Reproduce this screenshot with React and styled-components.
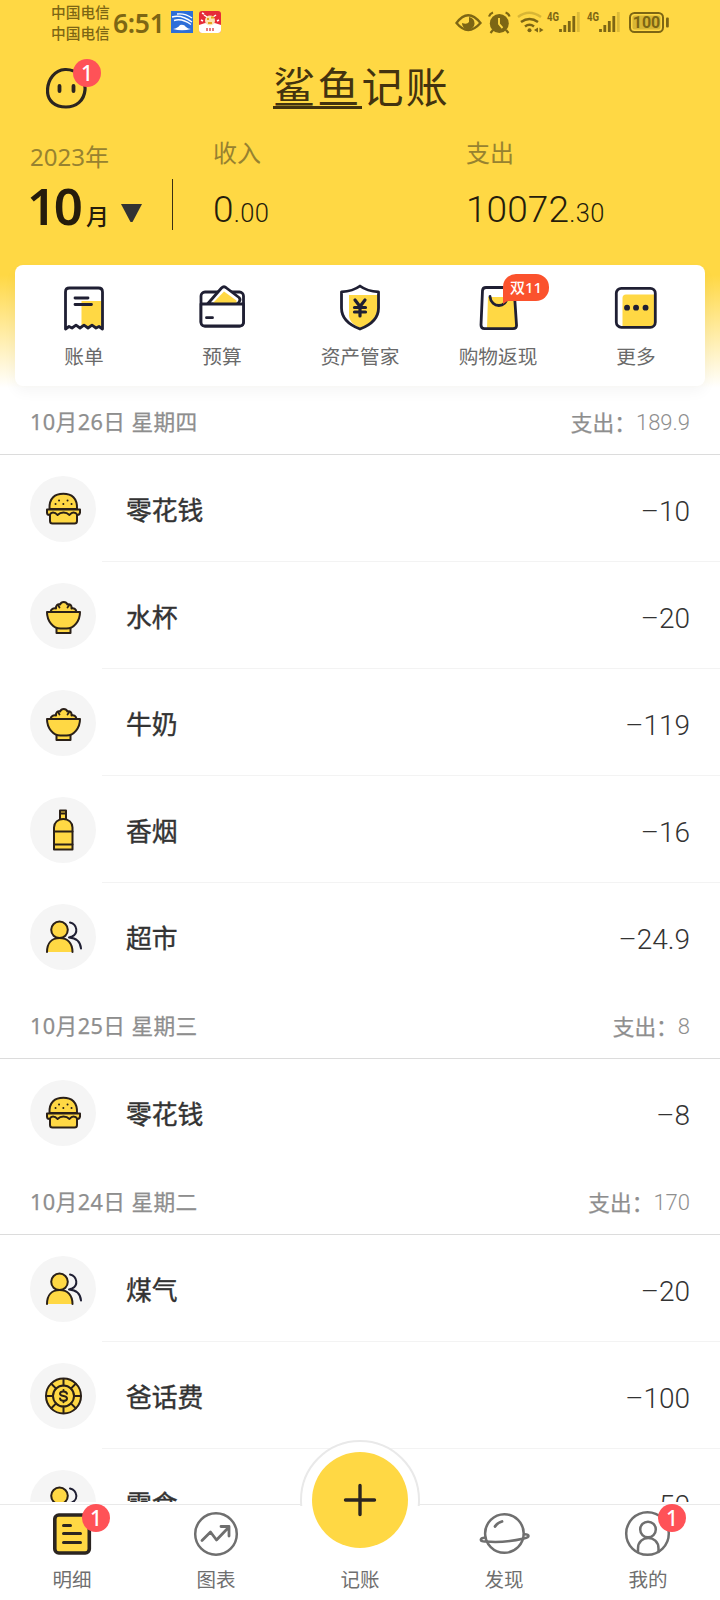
import styled, { createGlobalStyle } from "styled-components";

const DARK = "#2b2520";
const NAVY = "#1f1f33";
const YELLOW = "#ffd844";
const STATUS = "#7d6614";
const DIGITS = '"Noto Sans", "Noto Sans CJK SC", sans-serif';

const days = [
  {
    date: "10月26日 星期四",
    total: "189.9",
    items: [
      { icon: "burger", name: "零花钱", amount: "–10" },
      { icon: "rice", name: "水杯", amount: "–20" },
      { icon: "rice", name: "牛奶", amount: "–119" },
      { icon: "bottle", name: "香烟", amount: "–16" },
      { icon: "people", name: "超市", amount: "–24.9" },
    ],
  },
  {
    date: "10月25日 星期三",
    total: "8",
    items: [{ icon: "burger", name: "零花钱", amount: "–8" }],
  },
  {
    date: "10月24日 星期二",
    total: "170",
    items: [
      { icon: "people", name: "煤气", amount: "–20" },
      { icon: "coin", name: "爸话费", amount: "–100" },
      { icon: "people", name: "零食", amount: "–50" },
    ],
  },
];

const shortcuts = [
  { icon: "bill", label: "账单" },
  { icon: "wallet", label: "预算" },
  { icon: "shield", label: "资产管家" },
  { icon: "bag", label: "购物返现", tag: "双11" },
  { icon: "more", label: "更多" },
];

const tabs = [
  { icon: "detail", label: "明细", badge: 1 },
  { icon: "chart", label: "图表" },
  { icon: null, label: "记账" },
  { icon: "planet", label: "发现" },
  { icon: "mine", label: "我的", badge: 1 },
];

const categoryIcons = {
  burger: (
    <>
      <path d="M8.500 22C8 11 14 6.800 22.300 6.800S36.500 11 36 22z" fill={YELLOW} />
      <path d="M9 25v9q0 2.500 2.500 2.500h22q2.500 0 2.500-2.500v-9z" fill={YELLOW} />
      <path d="M6 22.500h33v3q-.5 2.500-2.500 2.500-1.500-2.500-4-2.500-2 0-4 2.500-2.500-2.500-6-2.500t-6 2.500q-2-2.500-4.500-2.500-2 0-3.500 2.500-2.500 0-2.500-2.500z" fill={YELLOW} />
      <path d="M18 13.500h.1M26.500 13.500h.1M14.500 17h.1M22.300 17h.1M30.500 17h.1" strokeWidth="1.900" />
    </>
  ),
  rice: (
    <>
      <path d="M9.500 18c.5-3 3-4 5.500-3.500-.5-3 2-5 4-4 1.500-3.500 6-3.500 7.500 0 2.500-.8 4.500 1 4 4 2.500-.5 4.500.5 5 3.500z" fill={YELLOW} />
      <path d="M17 11l1.500 2.500M28 11.500l-1.500 2" strokeWidth="1.800" />
      <path d="M15.500 34h14v5h-14z" fill={YELLOW} />
      <path d="M6 18h33c0 9-6 16.500-13.500 16.500h-6C12 34.500 6 27 6 18z" fill={YELLOW} />
    </>
  ),
  bottle: (
    <>
      <path d="M19 2.500h6v9h-6z" fill={YELLOW} />
      <path d="M13 41.500V19.500c0-5 4-8.500 9.300-8.500s9.200 3.500 9.200 8.500v22z" fill={YELLOW} />
      <path d="M13 23.500h18.500M13 36.500h18.500M19 5.500h6" />
    </>
  ),
  people: (
    <>
      <path d="M6 37c0-9 5-14 12.700-14S31.500 28 31.500 37" fill={YELLOW} />
      <circle cx="18.500" cy="14.800" r="8.300" fill={YELLOW} />
      <path d="M29 7.500c7.500 2 8.500 11 2 14l-3 1c7.500.5 11.500 5 12 11" stroke={NAVY} />
    </>
  ),
  coin: (
    <>
      <circle cx="22.500" cy="22" r="17.500" fill={YELLOW} />
      <circle cx="22.500" cy="22" r="10.500" />
      <path d="M22.500 5v6.500M22.500 32.500V39M5.500 22H12M33 22h6.500M10.300 9.800l4.800 4.800M29.900 29.400l4.800 4.800M34.700 9.800l-4.800 4.800M15.100 29.400l-4.800 4.800" />
      <path d="M26 19.800c-.4-1.700-1.800-2.400-3.500-2.400-1.900 0-3.500.8-3.500 2.400 0 3.200 7 1.400 7 4.600 0 1.700-1.600 2.400-3.500 2.400-1.700 0-3.300-.7-3.500-2.400M22.500 16v1.400M22.500 26.800v1.400" />
    </>
  ),
};

const shortcutIcons = {
  bill: (
    <>
      <path d="M21.500 18H42v26l-3-1.500-3 1.500-4-2.500-4 2.500-4-2.500-2.500 2z" fill={YELLOW} stroke="none" />
      <path d="M5.500 46V9q0-4 4-4h29q4 0 4 4v37L39 43.500l-3 1.500-4-2.800-4 2.800-4-2.800-4 2.800-4-2.800-4 2.800-3-1.500z" />
      <path d="M15 15h13M15 21.500h16.500" />
    </>
  ),
  wallet: (
    <>
      <rect x="3" y="9" width="42.500" height="34" rx="4" />
      <path d="M9.500 21L23.500 5q2.500-2.500 5 0L41 14.500q2 2 0 4.500l-1.500 2z" fill="#fff" />
      <path d="M14.500 20.500L26 8.500l12.500 9v3z" fill={YELLOW} stroke="none" />
      <path d="M3 21h42.500v18q0 4-4 4H7q-4 0-4-4z" fill="#fff" />
      <path d="M8.500 34.700h6" />
    </>
  ),
  shield: (
    <>
      <path d="M13 12h29v14c0 9-7 15-18 19C16 41 13 37 13 32z" fill={YELLOW} stroke="none" />
      <path d="M24 3c6 4.500 12 5.500 18.500 5.800V25c0 11-8 17-18.500 21C13.500 42 5.500 36 5.500 25V8.800C12 8.500 18 7.500 24 3z" />
      <path d="M19 17l5 6.500 5-6.500M24 23.500V33M18.500 24.500h11M18.500 29h11" strokeWidth="3.200" />
    </>
  ),
  bag: (
    <>
      <path d="M14 14h27l1.500 31H13z" fill={YELLOW} stroke="none" />
      <path d="M12 4.500h25q3 0 3.200 3L42.500 42q.3 3.700-3.500 3.700H10.500Q7 45.700 7 42L8.500 7.500q.3-3 3.500-3z" />
      <path d="M16 13.500c1 12 17 12 17 0" />
    </>
  ),
  more: (
    <>
      <path d="M10.500 15q0-3.500 3.500-3.500h28V40q0 3.500-3.500 3.500h-28z" fill={YELLOW} stroke="none" />
      <rect x="4.300" y="5.300" width="39" height="39" rx="5" />
      <path d="M15 24.700h.1M24 24.700h.1M33.500 24.700h.1" strokeWidth="5.800" />
    </>
  ),
};

const tabIcons = {
  detail: (
    <g stroke={DARK} strokeWidth="3.600">
      <rect x="6.800" y="6" width="34.500" height="38" rx="4" fill={YELLOW} />
      <path d="M15.500 16.500h7M15.500 24.500h17M15.500 33.500h17" strokeWidth="3" />
    </g>
  ),
  chart: (
    <>
      <circle cx="24" cy="25" r="20.800" />
      <path d="M10 31.500l8.500-8.500 6 8L36 19M29 17.500h8V27" strokeWidth="2.800" />
    </>
  ),
  planet: (
    <>
      <circle cx="24.400" cy="24.500" r="19.300" />
      <path d="M5.500 28.500c-6.500.5-6 4.500 0 4 13 1.200 25.500 0 38.500-3 6.500-1 5.500-4.500 0-4.300" />
      <path d="M15 17.500q2-3.500 7-5" strokeWidth="2.800" />
    </>
  ),
  mine: (
    <>
      <circle cx="23.500" cy="24.500" r="21.300" />
      <circle cx="24" cy="20.500" r="7.800" />
      <path d="M14 43v-3.500c0-14 20.500-14 20.500 0V43" />
    </>
  ),
};

function StatusBar() {
  return (
    <Status>
      <Carriers>
        <span>中国电信</span>
        <span>中国电信</span>
      </Carriers>
      <Clock>6:51</Clock>
      <AppIcons>
        <svg width="22" height="22" viewBox="0 0 22 22">
          <rect width="22" height="22" fill="#2d6fd8" />
          <path d="M1 6q9-3 20 5M3 9.500q8-2.500 17 4M6 3q8-1 15 4" fill="none" stroke="#fff" strokeWidth="1.400" />
          <path d="M2 18q5-1 7-4 4-1 6 2 2 2 5 2-9 2.500-18 0z" fill="#fff" />
        </svg>
        <svg width="22" height="22" viewBox="0 0 22 22">
          <rect width="22" height="22" rx="3" fill="#e62c38" />
          <path d="M0 14q11-5 22 0v5q0 3-3 3H3q-3 0-3-3z" fill="#fff" />
          <circle cx="11" cy="9.500" r="5" fill="#fbe3b1" />
          <path d="M5 4l3 2M17 4l-3 2M2 9l2 1M20 9l-2 1M3 2l2 1" stroke="#fff" strokeWidth="1.500" />
          <path d="M8 8h2M12 6.500h3M9 12h4" stroke="#e8a51b" strokeWidth="1.800" />
          <path d="M8 17v3M11 17v3M14 17v3" stroke="#d73a3a" strokeWidth="1.300" />
        </svg>
      </AppIcons>
      <Indicators width="216" height="24" viewBox="0 0 216 24">
        {/* eye */}
        <path d="M2.500 13Q14-2.500 26.500 13 14 27 2.500 13z" fill="none" stroke={STATUS} strokeWidth="2.300" />
        <path d="M15 7a6.300 6.300 0 1 1-7 6q5 2 7-1z" fill={STATUS} />
        {/* alarm */}
        <circle cx="45.300" cy="13.500" r="9.500" fill={STATUS} />
        <path d="M35 6.500q1-3 4-4M55.600 6.500q-1-3-4-4M39 20l-2.500 3M52 20l2.500 3" stroke={STATUS} strokeWidth="2.200" fill="none" />
        <path d="M45 8v6l3.500 4" stroke={YELLOW} strokeWidth="1.900" fill="none" />
        {/* wifi */}
        <g fill="none" stroke={STATUS} strokeWidth="2.500">
          <path d="M64 7q11-8.500 23 0" opacity=".3" />
          <path d="M67 12q8.500-6 17 0M71 16.500q4.500-3.500 9 0" />
        </g>
        <circle cx="75.500" cy="20.300" r="2" fill={STATUS} />
        <path d="M84 17.500l-4 2.500 4 2.500zM85.500 17.500l4 2.500-4 2.500z" fill={STATUS} />
        {[93, 133].map((x) => (
          <g key={x}>
            <NetText x={x} y="11" textLength="12" lengthAdjust="spacingAndGlyphs">4G</NetText>
            <path
              d={`M${x + 13.500} 22v-3M${x + 17.800} 22v-7M${x + 22.300} 22v-11M${x + 26.800} 22V6`}
              stroke={STATUS}
              strokeWidth="2.800"
            />
            <path d={`M${x + 31.300} 22V2`} stroke={STATUS} strokeWidth="2.800" opacity=".25" />
          </g>
        ))}
        {/* battery */}
        <rect x="176" y="3" width="33" height="19" rx="4.500" fill="none" stroke={STATUS} strokeWidth="2" />
        <rect x="178.500" y="5.500" width="28" height="14" rx="2" fill={STATUS} opacity=".3" />
        <rect x="212" y="7.500" width="2.800" height="10" rx="1" fill={STATUS} />
        <BatteryText x="192.500" y="18">100</BatteryText>
      </Indicators>
    </Status>
  );
}

function Entry({ icon, name, amount }) {
  return (
    <Row>
      <Avatar>
        <LineIcon size={44} viewBox="0 0 44 44" $color="#2a2018" $width={2}>
          {categoryIcons[icon]}
        </LineIcon>
      </Avatar>
      <RowBody>
        <Name>{name}</Name>
        <Amount>{amount}</Amount>
      </RowBody>
    </Row>
  );
}

function Day({ date, total, items }) {
  return (
    <section>
      <DayHeader>
        <DayDate>{date}</DayDate>
        <DayTotal>
          支出：<Light>{total}</Light>
        </DayTotal>
      </DayHeader>
      {items.map((item, i) => (
        <Entry key={i} {...item} />
      ))}
    </section>
  );
}

function App() {
  return (
    <Screen>
      <GlobalStyle />
      <StatusBar />
      <TitleBar>
        <Profile>
          <svg width="42" height="44" viewBox="0 0 42 44">
            <path
              d="M19 2.500C30 2 40 11 39 23c-1 11-9 17-19 17C9 40 1.500 34 1.500 24 1.500 12 9 3 19 2.500z"
              fill="none"
              stroke={DARK}
              strokeWidth="3.200"
            />
            <path d="M13.500 19v5M27.500 19v5" stroke={DARK} strokeWidth="3.800" strokeLinecap="round" />
          </svg>
          <Badge $top={-8} $left={27}>1</Badge>
        </Profile>
        <Logo>
          <em>鲨鱼</em>记账
        </Logo>
      </TitleBar>
      <Summary>
        <Month>
          <Caption>2023年</Caption>
          <MonthValue>
            <b>10</b>
            <span>月</span>
            <svg width="21" height="21" viewBox="0 0 21 21">
              <path d="M0 0h21L11.500 18h-2z" fill="#333" />
            </svg>
          </MonthValue>
        </Month>
        <Divider />
        <Figure $width={253}>
          <Caption>收入</Caption>
          <Money>0<small>.00</small></Money>
        </Figure>
        <Figure>
          <Caption>支出</Caption>
          <Money>10072<small>.30</small></Money>
        </Figure>
      </Summary>
      <Card>
        {shortcuts.map(({ icon, label, tag }) => (
          <Shortcut key={label}>
            <LineIcon size={48} viewBox="0 0 48 48" $color={NAVY} $width={2.800}>
              {shortcutIcons[icon]}
            </LineIcon>
            <span>{label}</span>
            {tag && <Tag>{tag}</Tag>}
          </Shortcut>
        ))}
      </Card>
      <List>
        {days.map((day) => (
          <Day key={day.date} {...day} />
        ))}
      </List>
      <TabBar>
        <Ring />
        <AddButton aria-label="add">
          <svg width="34" height="34" viewBox="0 0 34 34">
            <path d="M17 2.500v29M2.500 17h29" stroke={DARK} strokeWidth="3.400" strokeLinecap="round" />
          </svg>
        </AddButton>
        {tabs.map(({ icon, label, badge }) => (
          <Tab key={label}>
            <LineIcon size={48} viewBox="0 0 48 48" $color="#6f6f6f" $width={2.500}>
              {icon && tabIcons[icon]}
            </LineIcon>
            <span>{label}</span>
            {badge && <Badge $top={-1} $left={82}>{badge}</Badge>}
          </Tab>
        ))}
      </TabBar>
    </Screen>
  );
}

const GlobalStyle = createGlobalStyle`
  body {
    margin: 0;
    font-family: "Noto Sans CJK SC", sans-serif;
    background: #fff;
  }
`;

const Screen = styled.div`
  display: flex;
  flex-direction: column;
  width: 720px;
  height: 1600px;
  overflow: hidden;
  background: linear-gradient(${YELLOW} 0, ${YELLOW} 275px, #fff 388px);
`;

const Status = styled.header`
  display: flex;
  align-items: center;
  height: 46px;
  padding: 0 50px 0 51px;
  box-sizing: border-box;
  color: ${STATUS};
`;

const Carriers = styled.div`
  display: flex;
  flex-direction: column;
  width: 62px;
  margin-top: -2px;
  font-size: 14.700px;
  line-height: 21.500px;
  font-weight: 500;
`;

const Clock = styled.div`
  width: 58px;
  font-family: ${DIGITS};
  font-size: 26.500px;
  line-height: 30px;
  font-weight: 600;
  letter-spacing: -0.300px;
`;

const AppIcons = styled.div`
  display: flex;
  gap: 6px;
  margin-top: -2px;
`;

const Indicators = styled.svg`
  margin: -2px 0 0 auto;
`;

const NetText = styled.text`
  font: 700 12.500px Roboto, sans-serif;
  fill: ${STATUS};
`;

const BatteryText = styled.text`
  font: 700 16px Roboto, sans-serif;
  text-anchor: middle;
  fill: ${STATUS};
`;

const TitleBar = styled.div`
  display: flex;
  align-items: center;
  justify-content: center;
  height: 86px;
  position: relative;
`;

const Profile = styled.div`
  position: absolute;
  top: 21px;
  left: 46px;
`;

const Badge = styled.span`
  position: absolute;
  top: ${(p) => p.$top}px;
  left: ${(p) => p.$left}px;
  width: 28px;
  height: 28px;
  border-radius: 50%;
  background: #ff5257;
  color: #fff;
  font-family: ${DIGITS};
  font-size: 21px;
  line-height: 28px;
  font-weight: 500;
  text-align: center;
`;

const Logo = styled.h1`
  margin: -5px 0 0 3px;
  font-size: 42px;
  line-height: 42px;
  font-weight: 400;
  letter-spacing: 2.200px;
  color: #43330f;

  em {
    font-style: normal;
    display: inline-block;
    padding-bottom: 2px;
    border-bottom: 3px solid #43330f;
    line-height: 38px;
  }
`;

const Summary = styled.div`
  display: flex;
  height: 133px;
  flex: none;
`;

const Caption = styled.div`
  font-family: ${DIGITS};
  font-size: 24px;
  line-height: 32px;
  color: #978230;
`;

const Month = styled.div`
  width: 142px;
  padding: 9px 0 0 30px;
`;

const MonthValue = styled.div`
  display: flex;
  align-items: baseline;
  color: #251c0c;

  b {
    width: 56px;
    font-family: ${DIGITS};
    font-size: 51px;
    line-height: 65px;
    font-weight: 600;
    letter-spacing: -2.500px;
    text-indent: -3px;
  }

  span {
    font-size: 23px;
    font-weight: 500;
    width: 35px;
  }
`;

const Divider = styled.div`
  width: 1px;
  height: 51px;
  margin: 47px 40px 0 0;
  background: #3a2f12;
`;

const Figure = styled.div`
  width: ${(p) => (p.$width ? p.$width + "px" : "auto")};
  padding-top: 5px;
`;

const Money = styled.div`
  font-family: Roboto, sans-serif;
  font-size: 37px;
  line-height: 50px;
  margin-top: 16px;
  font-weight: 300;
  letter-spacing: 0.100px;
  color: #251c0c;

  small {
    font-size: 25.500px;
    letter-spacing: 0.500px;
  }
`;

const Card = styled.nav`
  display: grid;
  grid-template-columns: repeat(5, 1fr);
  flex: none;
  height: 121px;
  margin: 0 15px;
  border-radius: 8px;
  background: #fff;
  box-shadow: 0 6px 14px rgba(0, 0, 0, 0.04);
`;

const Shortcut = styled.div`
  display: flex;
  flex-direction: column;
  align-items: center;
  position: relative;
  padding-top: 18px;
  font-size: 19.700px;
  line-height: 28px;
  color: #6a6a6a;

  span:nth-child(2) {
    margin-top: 11px;
  }
`;

const Tag = styled.b`
  position: absolute;
  top: 9px;
  left: 74px;
  width: 46px;
  height: 27px;
  border-radius: 13px 13px 13px 0;
  background: #fb522d;
  color: #fff;
  font-family: ${DIGITS};
  font-size: 15px;
  line-height: 27px;
  font-weight: 500;
  text-align: center;

  &::after {
    content: "";
    position: absolute;
    left: 0;
    top: 26px;
    border-top: 4px solid #fb522d;
    border-right: 6px solid transparent;
  }
`;

const LineIcon = styled.svg.attrs((p) => ({ width: p.size, height: p.size }))`
  flex: none;
  fill: none;
  stroke: ${(p) => p.$color};
  stroke-width: ${(p) => p.$width};
  stroke-linecap: round;
  stroke-linejoin: round;
  overflow: visible;
`;

const List = styled.main`
  flex: 1;
  min-height: 0;
  overflow: hidden;
`;

const DayHeader = styled.div`
  display: flex;
  align-items: center;
  justify-content: space-between;
  height: 69px;
  box-sizing: border-box;
  padding: 4px 30px 0;
  border-bottom: 1px solid #dcdcdc;
  font-size: 21.700px;
  line-height: 32px;
  color: #8e8e8e;
  -webkit-text-stroke: 0.250px #8e8e8e;
`;

const DayDate = styled.span`
  font-family: ${DIGITS};
  font-size: 21.700px;
  letter-spacing: 0.400px;
`;

const DayTotal = styled.div`
  display: flex;
  align-items: center;
  margin-top: -1px;
`;

const Light = styled.span`
  font-family: Roboto, sans-serif;
  font-weight: 300;
  font-size: 22px;
  padding-top: 2px;
  -webkit-text-stroke: 0;
`;

const Row = styled.div`
  display: flex;
  align-items: center;
  height: 107px;
  padding-left: 30px;
`;

const Avatar = styled.div`
  display: grid;
  place-items: center;
  width: 66px;
  height: 66px;
  border-radius: 50%;
  background: #f5f5f5;
`;

const RowBody = styled.div`
  display: flex;
  align-items: center;
  justify-content: space-between;
  flex: 1;
  height: 107px;
  box-sizing: border-box;
  margin-left: 6px;
  padding: 1px 30px 0 24px;
  border-bottom: 1px solid #f3f3f3;

  section > div:last-child & {
    border-bottom-color: transparent;
  }
`;

const Name = styled.span`
  font-size: 25.800px;
  font-weight: 400;
  color: #333;
  -webkit-text-stroke: 0.400px #333;
`;

const Amount = styled.span`
  margin-top: 5px;
  font-family: Roboto, sans-serif;
  font-size: 28px;
  font-weight: 300;
  color: #333;
`;

const TabBar = styled.nav`
  display: grid;
  grid-template-columns: repeat(5, 1fr);
  flex: none;
  position: relative;
  height: 96px;
  margin-top: 2px;
  box-sizing: border-box;
  border-top: 1px solid #e9e9e9;
  background: #fff;
`;

const Tab = styled.div`
  display: flex;
  flex-direction: column;
  align-items: center;
  position: relative;
  padding-top: 4px;
  font-size: 19.500px;
  line-height: 28px;
  color: #6f6f6f;

  span:nth-child(2) {
    margin-top: 8px;
  }
`;

const Ring = styled.div`
  position: absolute;
  top: -65px;
  left: 300px;
  width: 120px;
  height: 66px;
  overflow: hidden;

  &::before {
    content: "";
    display: block;
    width: 120px;
    height: 120px;
    box-sizing: border-box;
    border: 2px solid #e9e9e9;
    border-radius: 50%;
    background: #fff;
  }
`;

const AddButton = styled.button`
  display: grid;
  place-items: center;
  position: absolute;
  z-index: 1;
  top: -53px;
  left: 312px;
  width: 96px;
  height: 96px;
  padding: 0;
  border: none;
  border-radius: 50%;
  background: ${YELLOW};
`;

export default App;
